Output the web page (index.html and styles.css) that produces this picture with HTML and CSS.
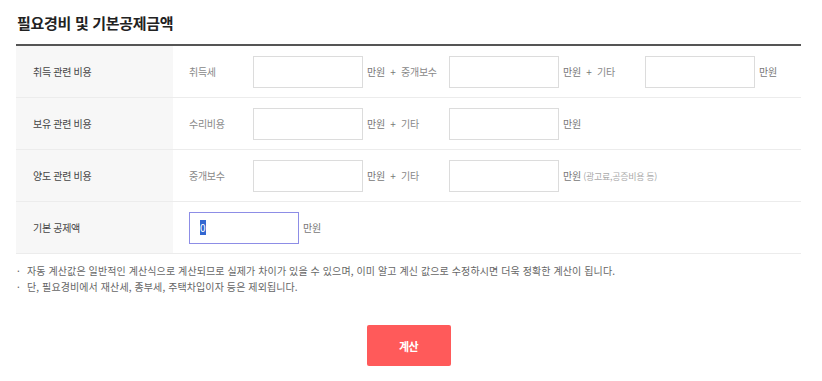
FILE: index.html
```html
<!DOCTYPE html>
<html lang="ko">
<head>
    <meta charset="UTF-8">
    <meta name="viewport" content="width=device-width, initial-scale=1.0">
    <title>필요경비 및 기본공제금액</title>

    <link rel="stylesheet" href="styles.css">
</head>
<body>
    <div class="wrap">
        <h2 class="title">필요경비 및 기본공제금액</h2>

        <div class="table">
            <div class="row">
                <div class="label">취득 관련 비용</div>
                <div class="cell">
                    <span class="sub">취득세</span>
                    <input type="text" class="box">
                    <span class="unit plus">만원 <i>+</i> <span class="sub2">중개보수</span></span>
                    <input type="text" class="box">
                    <span class="unit plus">만원 <i>+</i> <span class="sub2">기타</span></span>
                    <input type="text" class="box">
                    <span class="unit">만원</span>
                </div>
            </div>
            <div class="row">
                <div class="label">보유 관련 비용</div>
                <div class="cell">
                    <span class="sub">수리비용</span>
                    <input type="text" class="box">
                    <span class="unit plus">만원 <i>+</i> <span class="sub2">기타</span></span>
                    <input type="text" class="box">
                    <span class="unit">만원</span>
                </div>
            </div>
            <div class="row">
                <div class="label">양도 관련 비용</div>
                <div class="cell">
                    <span class="sub">중개보수</span>
                    <input type="text" class="box">
                    <span class="unit plus">만원 <i>+</i> <span class="sub2">기타</span></span>
                    <input type="text" class="box">
                    <span class="unit">만원 <small>(광고료,공증비용 등)</small></span>
                </div>
            </div>
            <div class="row">
                <div class="label">기본 공제액</div>
                <div class="cell">
                    <input type="text" class="box deduct" value="0">
                    <span class="unit">만원</span>
                </div>
            </div>
        </div>

        <ul class="notes">
            <li>자동 계산값은 일반적인 계산식으로 계산되므로 실제가 차이가 있을 수 있으며, 이미 알고 계신 값으로 수정하시면 더욱 정확한 계산이 됩니다.</li>
            <li>단, 필요경비에서 재산세, 종부세, 주택차입이자 등은 제외됩니다.</li>
        </ul>

        <div class="actions">
            <button type="button" class="calc">계산</button>
        </div>
    </div>

    <script src="script.js"></script>
</body>
</html>
```

FILE: styles.css
```css
body{
    margin:0;
    background:#fff;
    font-family:"Noto Sans CJK KR", "Noto Sans", sans-serif;
    color:#444;
}
div.wrap{
    width:785px;
    margin-left:16px;
}
h2.title{
    margin:0;
    height:44px;
    line-height:46px;
    font-size:15px;
    font-weight:700;
    letter-spacing:-0.3px;
    color:#222;
    padding-left:1px;
}
div.table{
    border-top:2px solid #555;
}
div.row{
    display:flex;
    height:51px;
    border-bottom:1px solid #ececec;
}
div.label{
    width:140px;
    flex:0 0 140px;
    padding-left:17px;
    background:#f7f7f7;
    display:flex;
    align-items:center;
    font-size:10px;
    letter-spacing:-0.3px;
    color:#444;
}
div.cell{
    display:flex;
    align-items:center;
    padding-left:16px;
    font-size:10px;
    letter-spacing:-0.3px;
}
span.sub{
    width:64px;
    flex:0 0 64px;
    color:#888;
}
span.sub2{
    color:#888;
}
span.unit{
    padding-left:4px;
    color:#777;
}
span.unit.plus{
    width:86px;
    flex:0 0 86px;
    box-sizing:border-box;
}
span.unit i{
    font-style:normal;
    padding:0 3px;
}
span.unit small{
    font-size:9px;
    color:#aaa;
}
input.box{
    width:110px;
    flex:0 0 110px;
    height:32px;
    box-sizing:border-box;
    border:1px solid #dcdcdc;
    padding:0 10px;
    margin:0;
    font-family:inherit;
    font-size:10px;
    color:#333;
    outline:none;
}
input.deduct,
input.box:focus{
    border-color:#8d8de6;
}
ul.notes{
    list-style:none;
    margin:9px 0 0;
    padding:0;
    font-size:10px;
    letter-spacing:0.1px;
    line-height:16px;
    color:#666;
}
ul.notes li{
    padding-left:11px;
    position:relative;
}
ul.notes li::before{
    content:"·";
    position:absolute;
    left:1px;
    top:0;
}
div.actions{
    display:flex;
    justify-content:center;
    padding-top:30px;
}
button.calc{
    width:84px;
    height:41px;
    border:0;
    border-radius:2px;
    background:#ff5a5a;
    color:#fff;
    font-family:inherit;
    font-size:11px;
    font-weight:700;
    letter-spacing:-0.5px;
}
```

FILE: script.js
```js
const deduct = document.querySelector(".deduct");
deduct.focus();
deduct.select();
```
